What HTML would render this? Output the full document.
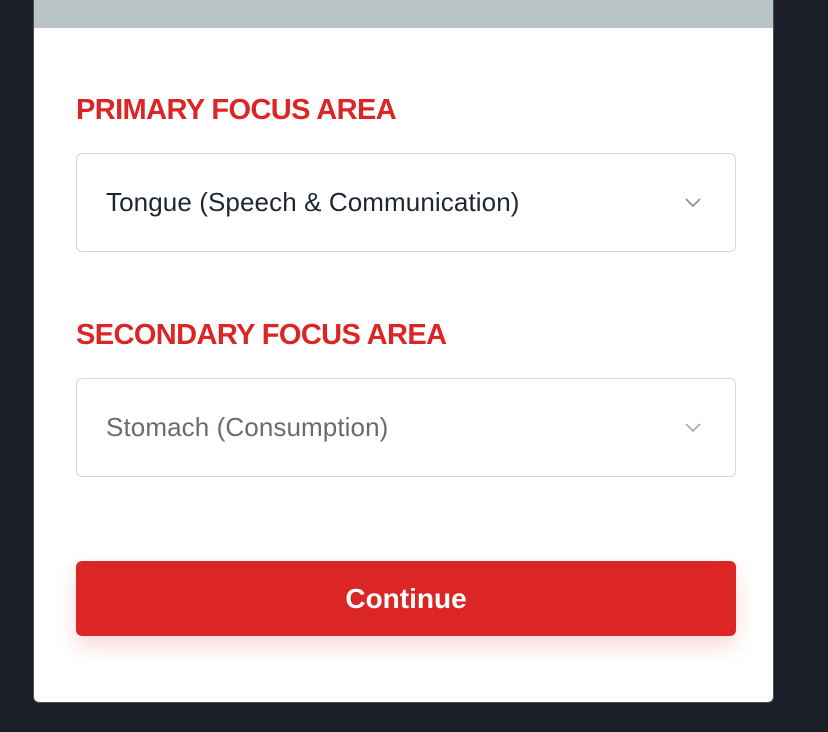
<!DOCTYPE html>
<html><head><meta charset="utf-8"><style>
html,body{margin:0;padding:0;width:828px;height:732px;background:#1c1f27;overflow:hidden;font-family:"Liberation Sans",sans-serif}
.card{position:absolute;left:33px;top:-10px;width:739px;height:711px;background:#fff;border:1px solid #4a4e57;border-radius:6px;overflow:hidden}
.bar{position:absolute;left:0;top:0;width:100%;height:37px;background:#b9c5c5}
.lbl{position:absolute;left:42px;color:#dc2626;font-weight:700;font-size:29px;letter-spacing:-0.6px;line-height:1;white-space:nowrap}
.sel{position:absolute;left:42px;width:660px;height:99px;border:1px solid #d5d8dc;border-radius:6px;box-sizing:border-box}
.sel span{position:absolute;left:29px;top:0;line-height:97px;font-size:26px;letter-spacing:0.1px;white-space:nowrap}
.sel svg{position:absolute;right:34px;top:44px}
.btn{position:absolute;left:42px;top:570px;width:660px;height:75px;background:#dc2626;border-radius:6px;box-shadow:0 10px 20px rgba(220,38,38,0.18);color:#fff;font-weight:700;font-size:28px;text-align:center;line-height:75px}
</style></head><body>
<div class="card">
<div class="bar"></div>
<div class="lbl" style="top:105px">PRIMARY FOCUS AREA</div>
<div class="sel" style="top:162px"><span style="color:#1f2633">Tongue (Speech &amp; Communication)</span><svg width="16" height="10" viewBox="0 0 16 10"><path d="M1 1l7 7 7-7" fill="none" stroke="#8a8f98" stroke-width="1.6"/></svg></div>
<div class="lbl" style="top:330px">SECONDARY FOCUS AREA</div>
<div class="sel" style="top:387px"><span style="color:#6f6a66">Stomach (Consumption)</span><svg width="16" height="10" viewBox="0 0 16 10"><path d="M1 1l7 7 7-7" fill="none" stroke="#a5a9b0" stroke-width="1.6"/></svg></div>
<div class="btn">Continue</div>
</div>
</body></html>
